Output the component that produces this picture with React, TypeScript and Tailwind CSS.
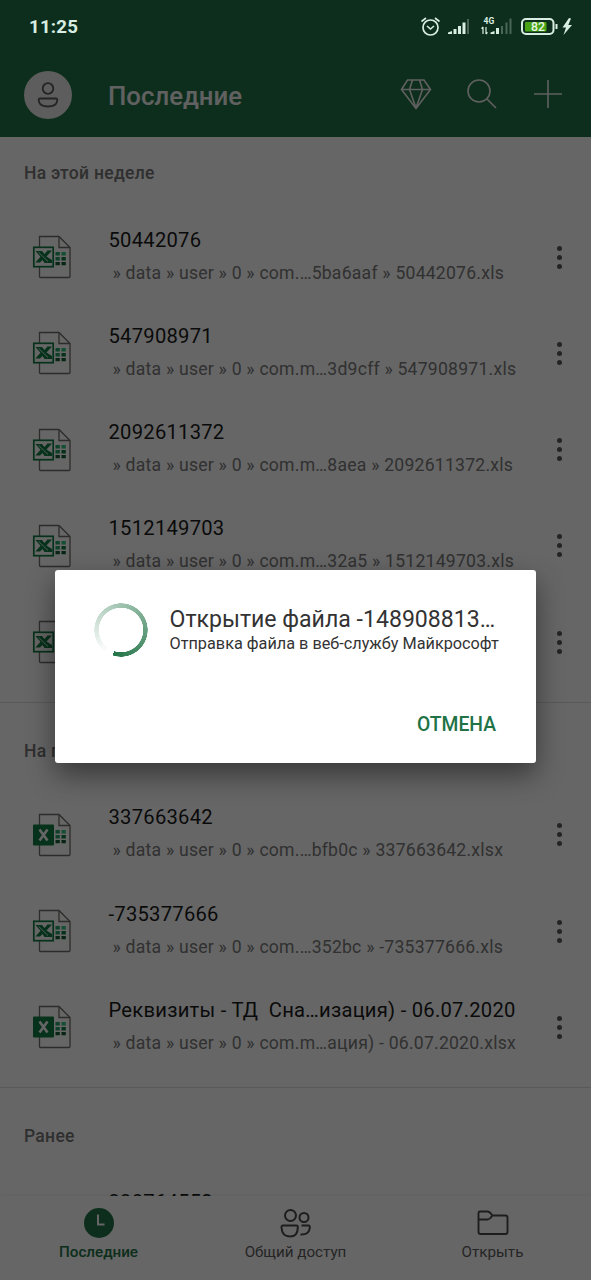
import React from 'react';

interface RecentFile {
  name: string;
  path: string;
  type: 'xls' | 'xlsx';
}

interface FileGroup {
  title: string;
  files: RecentFile[];
}

const groups: FileGroup[] = [
  {
    title: 'На этой неделе',
    files: [
      { name: '50442076', path: '» data » user » 0 » com.…5ba6aaf » 50442076.xls', type: 'xls' },
      { name: '547908971', path: '» data » user » 0 » com.m…3d9cff » 547908971.xls', type: 'xls' },
      { name: '2092611372', path: '» data » user » 0 » com.m…8aea » 2092611372.xls', type: 'xls' },
      { name: '1512149703', path: '» data » user » 0 » com.m…32a5 » 1512149703.xls', type: 'xls' },
      { name: '', path: '', type: 'xls' },
    ],
  },
  {
    title: 'На прошлой неделе',
    files: [
      { name: '337663642', path: '» data » user » 0 » com.…bfb0c » 337663642.xlsx', type: 'xlsx' },
      { name: '-735377666', path: '» data » user » 0 » com.…352bc » -735377666.xls', type: 'xls' },
      { name: 'Реквизиты - ТД  Сна…изация) - 06.07.2020', path: '» data » user » 0 » com.m…ация) - 06.07.2020.xlsx', type: 'xlsx' },
    ],
  },
  {
    title: 'Ранее',
    files: [{ name: '338764552', path: '', type: 'xls' }],
  },
];

const FileIcon: React.FC<{ type: RecentFile['type'] }> = ({ type }) => (
  <svg width="40" height="44" viewBox="0 0 40 44" fill="none">
    <path d="M7.5 1.5H27L38 12.5V41.5Q38 42.5 37 42.5H8.5Q7.5 42.5 7.5 41.5Z" fill="#fff" stroke="#706e6c" strokeWidth="1.3" />
    <path d="M27 1.5V12.5H38" stroke="#706e6c" strokeWidth="1.3" />
    <path d="M23.5 17h4.3v3.5h-4.3z M23.5 22h4.3v3.500h-4.300z" fill="#21a366" />
    <path d="M29.5 17h4.3v3.500h-4.300z" fill="#33c481" />
    <path d="M29.5 22h4.3v3.500h-4.300z" fill="#107c41" />
    <path d="M23.5 27h4.3v3.300h-4.300z M29.500 27h4.300v3.300h-4.300z" fill="#185c37" />
    {type === 'xlsx' ? (
      <>
        <rect x="1" y="11.5" width="21" height="21" rx="1" fill="#107c41" />
        <path d="M7.500 16.500L15.500 27.500M15.500 16.500L7.500 27.500" stroke="#fff" strokeWidth="2.6" />
      </>
    ) : (
      <>
        <rect x="1.800" y="12.300" width="19.400" height="19.400" fill="#fff" stroke="#107c41" strokeWidth="1.700" />
        <path d="M3.500 16H10L12.500 19L15.500 15.500H20L14.500 21.500L20 25V28H12.500L10.500 25L8 27.500H3.500L8.500 21.800Z" fill="#107c41" />
        <path d="M6.500 17.300L16 26.500" stroke="#fff" strokeWidth="0.8" />
      </>
    )}
  </svg>
);

const FileRow: React.FC<{ file: RecentFile }> = ({ file }) => (
  <div className="flex h-[96.25px] items-center pl-8">
    <FileIcon type={file.type} />
    <div className="ml-[36.5px] h-full grow pt-[17.5px] whitespace-pre">
      <div className="h-[26px] text-[20.2px] leading-[26px] tracking-[0.25px] text-[#1b1b1b]">{file.name}</div>
      <div className="mt-2 h-[24px] pl-1 text-[17.6px] leading-[24px] tracking-[0.23px] text-[#7a7a7a]">{file.path}</div>
    </div>
    <div className="mr-[29px] flex flex-col gap-1">
      <span className="size-[5px] rounded-full bg-[#5a5a5a]" />
      <span className="size-[5px] rounded-full bg-[#5a5a5a]" />
      <span className="size-[5px] rounded-full bg-[#5a5a5a]" />
    </div>
  </div>
);

const StatusBar = () => (
  <div className="absolute inset-x-0 top-0 z-30 flex h-[54px] items-center justify-between pr-[18px] pl-[29px] text-[#d9eee2]">
    <span className="text-[18.700px] font-bold tracking-[0.200px]">11:25</span>
    <svg width="153" height="24" viewBox="420 15 153 24" fill="none">
      <circle cx="430.5" cy="27.5" r="7.5" stroke="currentColor" strokeWidth="1.7" />
      <path d="M427 26L430.5 29L434 26M421.5 21.5L426 18M435 18L439.5 21.5" stroke="currentColor" strokeWidth="1.6" />
      <path d="M448 34v-1.5l4-1.500v3zM453.500 34v-5h3v5zM458 34v-8h3v8zM462.500 34V22.500h3V34z" fill="currentColor" />
      <path d="M467 34V19h2v15z" fill="#4b6556" />
      <text x="483.500" y="23.800" fill="currentColor" fontSize="8.500" fontWeight="700">4G</text>
      <path d="M483 34V27M481.500 28.700L483 27M486 27v7M487.500 32.300L486 34" stroke="currentColor" strokeWidth="1.200" />
      <path d="M490.500 34v-1.500l4-1.500v3zM496 34v-6h3v6z" fill="currentColor" />
      <path d="M501 34V26h2v8zM505.500 34V22.500h2V34zM509.500 34V18.500h2V34z" fill="#4b6556" />
      <rect x="522" y="19" width="31.500" height="15" rx="4" stroke="currentColor" strokeWidth="2" />
      <rect x="525" y="22" width="21.500" height="9.500" rx="1" fill="#48a315" />
      <path d="M556.500 24v5" stroke="currentColor" strokeWidth="2" />
      <text x="538" y="31.300" textAnchor="middle" fill="#e8f7e8" fontSize="12.300" fontWeight="500">82</text>
      <path d="M569 18L562.500 27.500H566L563.500 35L572 25H568.300L571 18.500Z" fill="currentColor" />
    </svg>
  </div>
);

const Header = () => (
  <header className="flex h-[137px] shrink-0 items-end bg-[#217346] px-6 pb-[18px] text-white">
    <div className="flex size-12 items-center justify-center rounded-full bg-[#e8e8e8]">
      <svg width="24" height="28" viewBox="0 0 24 28" fill="none" stroke="#5a5a5a" strokeWidth="1.8">
        <circle cx="12" cy="7.5" r="5.3" />
        <path d="M4 17.5H20Q21.5 17.5 21.3 19.3Q20.5 25.5 12 25.5Q3.5 25.5 2.7 19.3Q2.5 17.5 4 17.5Z" />
      </svg>
    </div>
    <h1 className="ml-9 grow text-[25.8px] leading-[46px] font-medium text-[#f3f3f3]">Последние</h1>
    <svg className="mr-0.5 mb-2" width="166" height="34" viewBox="399 77 166 34" fill="none" stroke="#efefef" strokeWidth="1.6">
      <path d="M407.5 80H424L430.5 89.5L416 108.500L401.500 89.500ZM401.500 89.500H430.500M412.500 80L409.500 89.500L416 108M419.500 80L422.500 89.500L416 108" />
      <circle cx="479" cy="91" r="11" />
      <path d="M487 99L496 108M548 80V108M534 94H562" />
    </svg>
  </header>
);

const BottomNav = () => (
  <nav className="relative z-10 grid h-[84px] shrink-0 grid-cols-3 bg-white text-[15.2px] text-[#5c5c5c] shadow-[0_-1px_3px_rgba(0,0,0,0.06)]">
    <div className="flex flex-col items-center pt-[11px] font-medium text-[#217346]">
      <svg width="32" height="32" viewBox="0 0 32 32" fill="none">
        <circle cx="16" cy="16" r="15" fill="#217346" />
        <path d="M15 7.5V17.5H21.5" stroke="#fff" strokeWidth="2" />
      </svg>
      <span className="mt-[3px] leading-5">Последние</span>
    </div>
    <div className="flex flex-col items-center pt-[11px]">
      <svg width="32" height="32" viewBox="0 0 32 32" fill="none" stroke="#4a4a4a" strokeWidth="2">
        <circle cx="10.5" cy="8.5" r="5.500" />
        <circle cx="24" cy="10.500" r="4.500" />
        <path d="M3 18.500H16.500Q18 18.500 17.800 20.500Q17.800 29.500 10 29.500Q2 29.500 1.500 20.500Q1.300 18.500 3 18.500ZM21.500 18.500H28.500Q30 18.500 29.800 20.500Q29.500 28 20.500 27.500" />
      </svg>
      <span className="mt-[3px] leading-5">Общий доступ</span>
    </div>
    <div className="flex flex-col items-center pt-[11px]">
      <svg width="32" height="32" viewBox="0 0 32 32" fill="none" stroke="#4a4a4a" strokeWidth="1.9" strokeLinejoin="round">
        <path d="M1.500 6Q1.500 4.500 3 4.500H10.500Q12.500 4.500 15.500 8.500H28.500Q30.500 8.500 30.500 10.500V25Q30.500 27 28.500 27H3.500Q1.500 27 1.500 25ZM1.500 12.500H10.500Q12.500 12.500 15.500 8.500" />
      </svg>
      <span className="mt-[3px] leading-5">Открыть</span>
    </div>
  </nav>
);

const OpeningDialog = () => (
  <div className="absolute inset-0 z-20 bg-black/60">
    <div className="absolute top-[570px] left-[55px] flex h-[193px] w-[481px] flex-col rounded-[3px] bg-white shadow-[0_12px_28px_rgba(0,0,0,0.45)]">
      <div className="flex pt-[33px] pl-[39px]">
        <div className="size-[54px] rotate-[198deg] rounded-full bg-[conic-gradient(from_0deg,transparent_4%,#217346_100%)] [mask:radial-gradient(circle,transparent_22px,#000_22.5px,#000_26.5px,transparent_27px)]" />
        <div className="ml-[21.5px] whitespace-nowrap text-[#333]">
          <div className="mt-[3px] text-[23.1px] leading-[28px]">Открытие файла -148908813…</div>
          <div className="text-[16.25px] leading-[20px]">Отправка файла в веб-службу Майкрософт</div>
        </div>
      </div>
      <button className="mt-auto mr-10 mb-[25.5px] self-end text-[19.3px] leading-[26px] font-medium text-[#217346]">ОТМЕНА</button>
    </div>
  </div>
);

export default function App() {
  return (
    <div className="relative flex h-[1280px] w-[591px] flex-col overflow-hidden bg-white font-['Roboto',sans-serif]">
      <Header />
      <main className="min-h-0 grow overflow-hidden">
        {groups.map((group, i) => (
          <section key={group.title} className={i === 0 ? 'pb-3' : 'border-t border-[#dedede] pt-[11.5px] pb-[11.5px]'}>
            <h2 className="h-[72px] pl-6 text-[17.5px] leading-[72px] font-medium tracking-[0.3px] text-[#767676]">{group.title}</h2>
            {group.files.map((file, j) => (
              <FileRow key={j} file={file} />
            ))}
          </section>
        ))}
      </main>
      <BottomNav />
      <OpeningDialog />
      <StatusBar />
    </div>
  );
}
